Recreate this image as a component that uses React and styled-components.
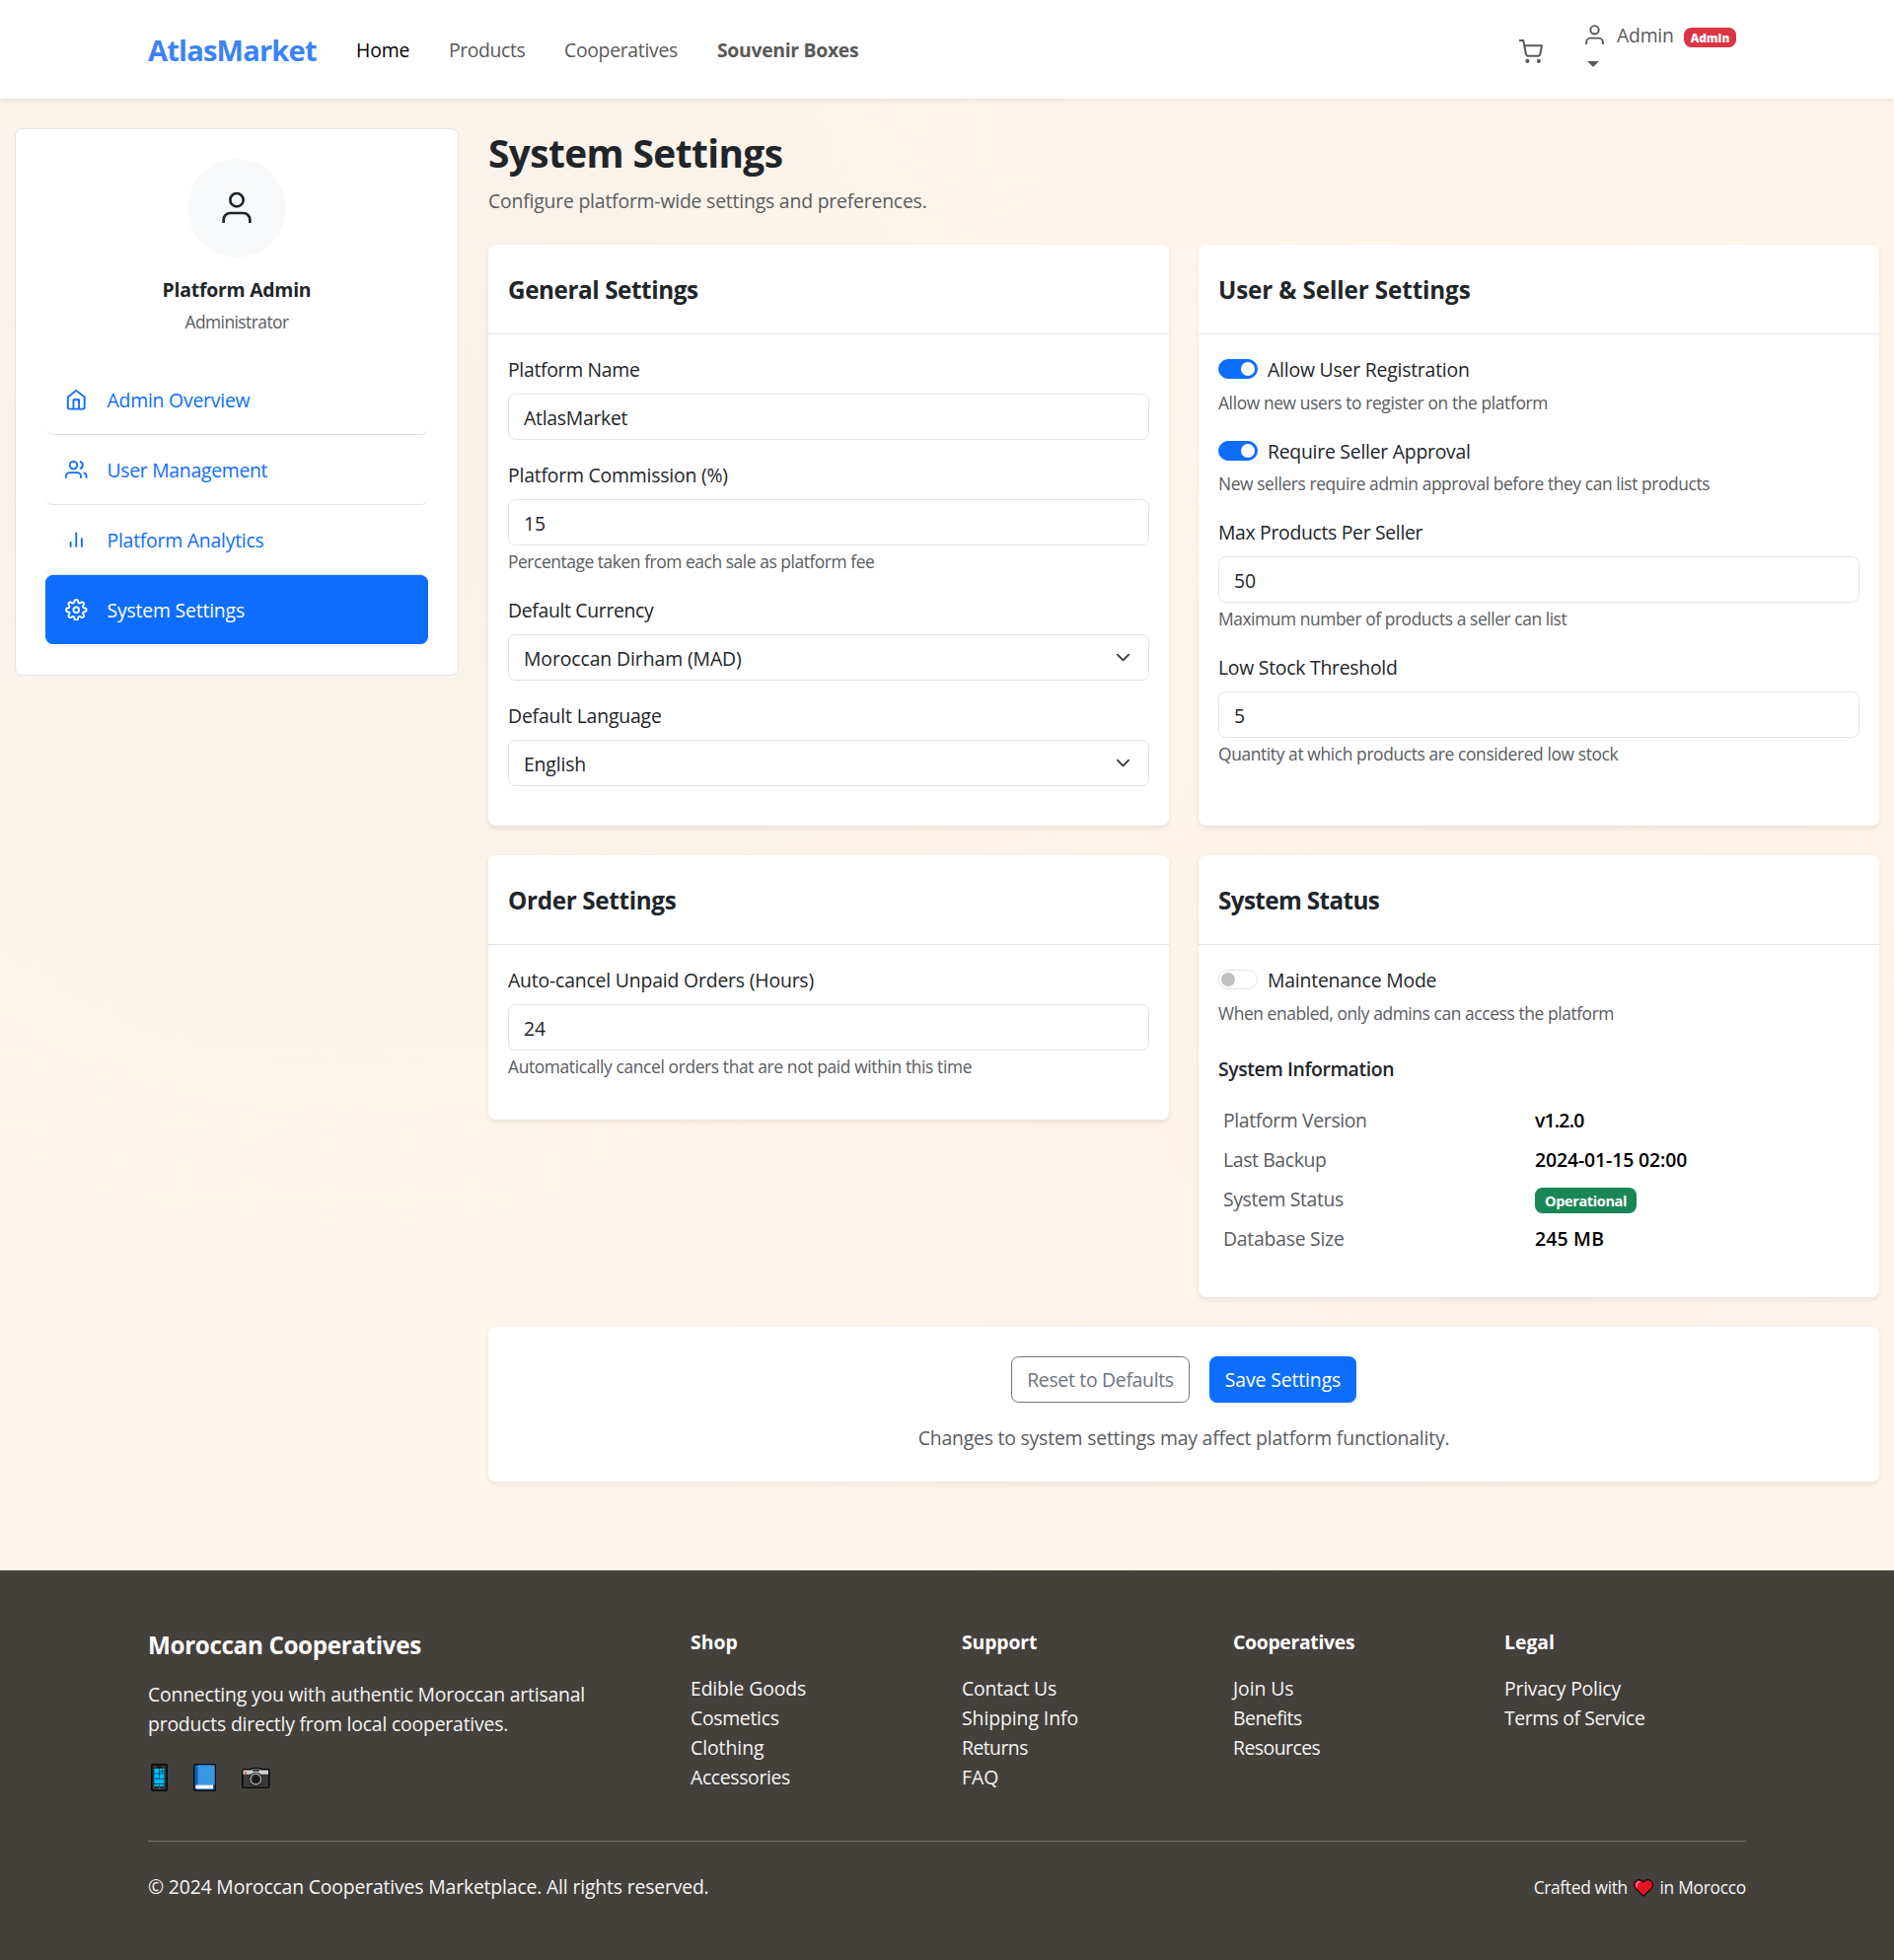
import React from "react";
import styled, { createGlobalStyle, css } from "styled-components";
import {
  FiBarChart2,
  FiHome,
  FiSettings,
  FiShoppingCart,
  FiUser,
  FiUsers,
} from "react-icons/fi";

const colors = {
  primary: "#0d6efd",
  brand: "#3b82f6",
  text: "#212529",
  muted: "#595c5f",
  border: "#dee2e6",
  footer: "#44403c",
  footerText: "#f5f5f4",
};

const Global = createGlobalStyle`
  *, *::before, *::after { box-sizing: border-box; }
  body {
    margin: 0;
    font-family: "Open Sans", "Noto Sans", sans-serif;
    font-size: 19.4px;
    line-height: 30px;
    color: ${colors.text};
    background-color: #fff6eb;
    background-image:
      radial-gradient(circle at 350px 480px, rgba(59, 130, 220, 0.035) 0, rgba(59, 130, 220, 0.027) 400px, rgba(59, 130, 220, 0) 860px),
      radial-gradient(circle at 1536px 1000px, rgba(214, 100, 40, 0.03) 0, rgba(214, 100, 40, 0) 1000px);
  }
  h1, h2, h3, h4, p, ul { margin: 0; padding: 0; }
  ul { list-style: none; }
  a { color: inherit; text-decoration: none; }
`;

/* Single line of text: a fixed row height with optional letter tracking. */
const line = css`
  height: 30px;
  line-height: 32px;
  white-space: nowrap;
  letter-spacing: ${(p) => (p.$ls === undefined ? -0.2 : p.$ls)}px;
`;

const cardSurface = css`
  background: #fff;
  border-radius: 7.5px;
  box-shadow: 0 2.5px 5px rgba(0, 0, 0, 0.075);
`;

/* ---------- top bar ---------- */

const TopBar = styled.header`
  position: relative;
  height: 100px;
  background: #fff;
  box-shadow: 0 2.5px 5px rgba(0, 0, 0, 0.075);
`;

const Container = styled.div`
  width: 1620px;
  margin: 0 auto;
`;

const NavRow = styled(Container)`
  height: 100px;
  display: flex;
  align-items: center;
`;

const Brand = styled.a`
  width: 211px;
  height: 45px;
  font-size: 29.1px;
  font-weight: 700;
  line-height: 47px;
  letter-spacing: -0.81px;
  color: ${colors.brand};
`;

const NavLinks = styled.nav`
  flex: 1;
  display: flex;
  gap: 40px;
`;

const NavLink = styled.a`
  ${line}
  width: ${(p) => p.$width}px;
  color: ${(p) => (p.$active ? "#000" : "#595959")};
  font-weight: ${(p) => (p.$strong ? 700 : 400)};
`;

const CartLink = styled.a`
  display: flex;
  margin: 5px 40px 0 0;
  color: #595959;
  svg { stroke-width: 1.9; stroke-linecap: butt; }
`;

const UserMenu = styled.div`
  width: 166px;
  height: 60px;
  color: #595959;
`;

const UserRow = styled.div`
  display: flex;
  align-items: flex-start;
  height: 30px;
  svg { margin-top: 3px; stroke-width: 1.9; stroke-linecap: butt; }
`;

const UserName = styled.span`
  ${line}
  width: 68px;
  margin-left: 10px;
`;

const RoleBadge = styled.span`
  width: 53px;
  height: 20px;
  margin-top: 8px;
  border-radius: 7.5px;
  background: #dc3545;
  color: #fff;
  font-size: 11.8px;
  font-weight: 800;
  line-height: 21px;
  text-align: center;
`;

const Caret = styled.span`
  display: block;
  width: 12px;
  margin: 12px 0 0 5px;
  border: 6px solid transparent;
  border-top-color: currentColor;
  border-bottom: 0;
`;

/* ---------- page layout ---------- */

const Page = styled.div`
  display: grid;
  grid-template-columns: 450px 1fr;
  gap: 30px;
  align-items: start;
  min-height: 1492px;
  padding: 30px 15px 0;
`;

const Sidebar = styled.aside`
  height: 555px;
  padding: 30px;
  background: #fff;
  border: 1px solid ${colors.border};
  border-radius: 7.5px;
`;

const Avatar = styled.div`
  width: 100px;
  height: 100px;
  margin: 0 auto 20px;
  display: flex;
  align-items: center;
  justify-content: center;
  border-radius: 50%;
  background: #f8f9fa;
  svg { stroke-width: 1.6; stroke-linecap: butt; }
`;

const ProfileName = styled.h2`
  height: 24px;
  margin-bottom: 5px;
  font-size: 19.4px;
  font-weight: 700;
  line-height: 26px;
  letter-spacing: -0.23px;
  text-align: center;
`;

const SmallText = styled.small`
  font-size: 17.4px;
`;

const ProfileRole = styled.p`
  ${line}
  margin-bottom: 30px;
  text-align: center;
  color: ${colors.muted};
`;

const SideLink = styled.a`
  display: flex;
  align-items: center;
  height: ${(p) => (p.$active ? 70 : 71)}px;
  padding: 0 20px;
  border-radius: 7.5px;
  border-bottom: ${(p) => (p.$active ? "0" : `1px solid ${colors.border}`)};
  background: ${(p) => (p.$active ? colors.primary : "transparent")};
  color: ${(p) => (p.$active ? "#fff" : colors.primary)};
  svg { margin-right: 20px; stroke-width: 2; stroke-linecap: butt; }
`;

const SideLabel = styled.span`
  ${line}
`;

const PageTitle = styled.h1`
  height: 48px;
  margin-bottom: 10px;
  font-size: 38.8px;
  font-weight: 700;
  line-height: 50px;
  letter-spacing: -0.59px;
`;

const PageLead = styled.p`
  ${line}
  margin-bottom: 30px;
  color: ${colors.muted};
`;

const CardGrid = styled.div`
  display: grid;
  grid-template-columns: 1fr 1fr;
  grid-template-rows: 589px 448px;
  gap: 30px;
  align-items: start;
`;

const Card = styled.section`
  ${cardSurface}
  height: ${(p) => p.$height}px;
`;

const CardHeader = styled.div`
  height: 91px;
  padding: 30px 20px;
  border-bottom: 1px solid ${colors.border};
`;

const CardTitle = styled.h3`
  ${line}
  font-size: 24.25px;
  font-weight: 700;
`;

const CardBody = styled.div`
  padding: 20px;
`;

/* ---------- form parts ---------- */

const Group = styled.div`
  margin-bottom: 20px;
`;

const Label = styled.label`
  ${line}
  display: block;
  margin-bottom: 10px;
`;

const control = css`
  display: block;
  width: 100%;
  height: 47px;
  margin: 0;
  padding: 8.5px 15px 6.5px;
  border: 1px solid ${colors.border};
  border-radius: 7.5px;
  background: #fff;
  color: ${colors.text};
  font-family: inherit;
  font-size: 19.4px;
  line-height: 30px;
  letter-spacing: ${(p) => p.$ls || 0}px;
  outline: none;
`;

const Input = styled.input`
  ${control}
`;

const SelectWrap = styled.div`
  position: relative;
`;

const Select = styled.select`
  ${control}
  appearance: none;
`;

const Chevron = styled.svg`
  position: absolute;
  top: 16px;
  right: 19px;
  width: 15px;
  height: 15px;
  pointer-events: none;
`;

const HelpText = styled.div`
  ${line}
  color: ${colors.muted};
`;

const SwitchRow = styled.div`
  display: flex;
  height: 32.5px;
`;

const SwitchTrack = styled.span`
  display: flex;
  align-items: center;
  justify-content: ${(p) => (p.$on ? "flex-end" : "flex-start")};
  width: 40px;
  height: 20px;
  margin: 5px 10px 0 0;
  padding: 0 2px;
  border: 1px solid ${(p) => (p.$on ? colors.primary : colors.border)};
  border-radius: 20px;
  background: ${(p) => (p.$on ? colors.primary : "#fff")};
`;

const SwitchKnob = styled.span`
  width: 14px;
  height: 14px;
  border-radius: 50%;
  background: ${(p) => (p.$on ? "#fff" : "#bfbfbf")};
`;

const SwitchLabel = styled.span`
  ${line}
`;

/* ---------- system information ---------- */

const InfoTitle = styled.h4`
  height: 24px;
  margin: 30px 0 20.5px;
  font-size: 19.4px;
  font-weight: 600;
  line-height: 26px;
  letter-spacing: -0.4px;
`;

const InfoRow = styled.div`
  display: grid;
  grid-template-columns: 316px 1fr;
  height: 40px;
  padding: 5px;
`;

const InfoKey = styled.span`
  ${line}
  color: ${colors.muted};
`;

const InfoValue = styled.span`
  ${line}
  color: #000;
  font-weight: 600;
`;

const StatusBadge = styled.span`
  width: 103px;
  height: 26px;
  margin-top: 4px;
  border-radius: 7.5px;
  background: #198754;
  color: #fff;
  font-size: 14.55px;
  font-weight: 700;
  line-height: 27px;
  letter-spacing: -0.39px;
  text-align: center;
`;

/* ---------- actions ---------- */

const Actions = styled.section`
  ${cardSurface}
  height: 157px;
  margin-top: 30px;
  padding-top: 30px;
`;

const ButtonRow = styled.div`
  display: flex;
  justify-content: center;
  gap: 20px;
  margin-bottom: 20px;
`;

const Button = styled.button`
  width: ${(p) => p.$width}px;
  height: 47px;
  padding: 1px 0 0;
  border: 1px solid ${(p) => (p.$primary ? colors.primary : "#6c757d")};
  border-radius: 7.5px;
  background: ${(p) => (p.$primary ? colors.primary : "#fff")};
  color: ${(p) => (p.$primary ? "#fff" : "#6c757d")};
  font-family: inherit;
  font-size: 19.4px;
  line-height: 30px;
  letter-spacing: ${(p) => p.$ls}px;
`;

const ActionNote = styled.p`
  ${line}
  text-align: center;
  color: ${colors.muted};
`;

/* ---------- footer ---------- */

const Footer = styled.footer`
  height: 395px;
  padding-top: 60px;
  background: ${colors.footer};
  color: ${colors.footerText};
`;

const FooterGrid = styled(Container)`
  display: grid;
  grid-template-columns: 550px 275px 275px 275px 1fr;
  height: 214px;
`;

const FooterBrand = styled.h3`
  ${line}
  margin-bottom: 20px;
  color: #fff;
  font-size: 24.25px;
  font-weight: 700;
`;

const FooterLine = styled.span`
  ${line}
  display: block;
`;

const FooterHeading = styled.h4`
  height: 24px;
  margin-bottom: 20px;
  color: #fff;
  font-size: 19.4px;
  font-weight: 700;
  line-height: 26px;
  letter-spacing: ${(p) => p.$ls}px;
`;

const FooterItem = styled.li`
  ${line}
`;

const Social = styled.div`
  display: flex;
  align-items: center;
  gap: 26px;
  height: 28px;
  margin: 26px 0 0 3px;
`;

const FooterBottom = styled(Container)`
  display: flex;
  justify-content: space-between;
  padding-top: 30px;
  border-top: 1px solid #78716c;
`;

const Copyright = styled.p`
  ${line}
`;

const Crafted = styled.p`
  display: flex;
  height: 30px;
  font-size: 17.4px;
  line-height: 33px;
  svg { margin: 8px 6.5px 0 6px; }
`;

const CraftedWord = styled.span`
  letter-spacing: ${(p) => p.$ls}px;
`;

/* ---------- drawings ---------- */

const PhoneIcon = () => (
  <svg width="17" height="28" viewBox="0 0 17 28">
    <rect width="17" height="28" rx="2" fill="#080808" />
    <rect x="1.6" y="1.5" width="13.8" height="25" rx="1" fill="#333" />
    <rect x="6" y="2.4" width="5" height="1.2" fill="#0a0a0a" />
    <rect x="3" y="4.8" width="11" height="18.4" fill="#06202c" />
    <g fill="#00bcf8">
      <rect x="3.3" y="5" width="5" height="4.7" />
      <rect x="8.9" y="5" width="2.1" height="2.1" />
      <rect x="11.500" y="5" width="2.1" height="2.1" />
      <rect x="8.900" y="7.600" width="2.1" height="2.1" />
      <rect x="11.500" y="7.600" width="2.1" height="2.1" />
      <rect x="3.300" y="10.300" width="5" height="4.500" />
      <rect x="8.900" y="10.300" width="4.700" height="4.500" />
      <rect x="3.300" y="15.500" width="10.300" height="4.500" />
      <rect x="3.300" y="20.700" width="5" height="2.200" />
      <rect x="8.900" y="20.700" width="4.700" height="2.200" />
    </g>
    <rect x="8" y="24.200" width="1.200" height="1.200" fill="#888" />
  </svg>
);

const BookIcon = () => (
  <svg width="23" height="28" viewBox="0 0 23 28">
    <path d="M3 0h20v28H3a3 3 0 0 1-3-3V3a3 3 0 0 1 3-3z" fill="#050b12" />
    <path d="M3 1.4h18.6v25.2H3a1.6 1.6 0 0 1-1.6-1.6V3A1.6 1.6 0 0 1 3 1.4z" fill="#1262ae" />
    <path d="M4.6 1.4h17v20.1h-17z" fill="#3b96e0" />
    <path d="M4 21.6h16v4H4a2 2 0 0 1 0-4z" fill="#f4f4f4" />
  </svg>
);

const CameraIcon = () => (
  <svg width="28.5" height="21" viewBox="0 0 28.5 21">
    <path d="M2 1h7l1.5-1h8L20 1h6.5a2 2 0 0 1 2 2v16a2 2 0 0 1-2 2H2a2 2 0 0 1-2-2V3a2 2 0 0 1 2-2z" fill="#050505" />
    <path d="M1.5 3H27v16a.7.7 0 0 1-.7.7H2.2a.7.7 0 0 1-.7-.7z" fill="#3a3a3a" />
    <path d="M1.5 2.6h8.2L11 1.4h7l1.300 1.200H27v4.200H1.500z" fill="#d2d2d2" />
    <rect x="3" y="4.2" width="2" height="2" fill="#e8462c" />
    <rect x="11" y="2" width="7" height="1.8" fill="#333" />
    <circle cx="14.3" cy="11.7" r="7" fill="#111" />
    <circle cx="14.3" cy="11.7" r="5.5" fill="#2e2e2e" stroke="#b8b8b8" strokeWidth="1.2" />
    <circle cx="14.3" cy="11.7" r="3.3" fill="#181818" />
  </svg>
);

const HeartIcon = () => (
  <svg width="20" height="18" viewBox="0 0 20 18">
    <path
      d="M10 17.2L1.9 9.4C-.2 7.2.3 3.2 2.7 1.6 5.1.1 8 .7 10 3c2-2.3 4.900-2.900 7.300-1.400 2.400 1.600 2.900 5.600.8 7.800z"
      fill="#e81224"
      stroke="#0c0c0c"
      strokeWidth="1.2"
      strokeLinejoin="round"
    />
    <path d="M3.4 7.2C2.6 5 3.7 3.2 5.7 3" fill="none" stroke="#f9a0a6" strokeWidth="1.3" strokeLinecap="round" />
  </svg>
);

/* ---------- composed parts ---------- */

const Field = ({ label, ls, value, help, helpLs }) => (
  <Group>
    <Label $ls={ls}>{label}</Label>
    <Input defaultValue={value} $ls={value.length > 2 ? -0.27 : 0} />
    {help && <Help ls={helpLs}>{help}</Help>}
  </Group>
);

const Help = ({ children, ls }) => (
  <HelpText $ls={ls}>
    <SmallText>{children}</SmallText>
  </HelpText>
);

const SelectField = ({ label, ls, value, valueLs }) => (
  <Group>
    <Label $ls={ls}>{label}</Label>
    <SelectWrap>
      <Select $ls={valueLs} defaultValue={value}>
        <option>{value}</option>
      </Select>
      <Chevron viewBox="0 0 16 16" fill="none">
        <path d="m2 5 6 6 6-6" stroke="#343a40" strokeWidth="2" strokeLinecap="round" strokeLinejoin="round" />
      </Chevron>
    </SelectWrap>
  </Group>
);

const SwitchField = ({ label, ls, on, help, helpLs }) => (
  <Group>
    <SwitchRow>
      <SwitchTrack $on={on}>
        <SwitchKnob $on={on} />
      </SwitchTrack>
      <SwitchLabel $ls={ls}>{label}</SwitchLabel>
    </SwitchRow>
    <Help ls={helpLs}>{help}</Help>
  </Group>
);

const Panel = ({ title, ls, height, children }) => (
  <Card $height={height}>
    <CardHeader>
      <CardTitle $ls={ls}>{title}</CardTitle>
    </CardHeader>
    <CardBody>{children}</CardBody>
  </Card>
);

const sideLinks = [
  { icon: FiHome, text: "Admin Overview", ls: -0.22 },
  { icon: FiUsers, text: "User Management", ls: -0.3 },
  { icon: FiBarChart2, text: "Platform Analytics", ls: -0.23 },
  { icon: FiSettings, text: "System Settings", ls: -0.19, active: true },
];

const footerColumns = [
  {
    title: "Shop",
    ls: 0.02,
    items: [["Edible Goods", -0.14], ["Cosmetics", -0.3], ["Clothing", -0.05], ["Accessories", -0.35]],
  },
  {
    title: "Support",
    ls: -0.13,
    items: [["Contact Us", -0.2], ["Shipping Info", -0.07], ["Returns", -0.55], ["FAQ", 0]],
  },
  {
    title: "Cooperatives",
    ls: -0.32,
    items: [["Join Us", -0.1], ["Benefits", -0.5], ["Resources", -0.53]],
  },
  {
    title: "Legal",
    ls: 0,
    items: [["Privacy Policy", -0.23], ["Terms of Service", -0.42]],
  },
];

export default function App() {
  return (
    <>
      <Global />
      <TopBar>
        <NavRow>
          <Brand href="#">AtlasMarket</Brand>
          <NavLinks>
            <NavLink href="#" $active $width={54} $ls={-0.15}>Home</NavLink>
            <NavLink href="#" $width={77} $ls={-0.4}>Products</NavLink>
            <NavLink href="#" $width={115} $ls={-0.31}>Cooperatives</NavLink>
            <NavLink href="#" $strong $width={146} $ls={-0.32}>Souvenir Boxes</NavLink>
          </NavLinks>
          <CartLink href="#">
            <FiShoppingCart size={25} />
          </CartLink>
          <UserMenu>
            <UserRow>
              <FiUser size={25} />
              <UserName $ls={-0.24}>Admin</UserName>
              <RoleBadge>Admin</RoleBadge>
            </UserRow>
            <Caret />
          </UserMenu>
        </NavRow>
      </TopBar>

      <Page>
        <Sidebar>
          <Avatar>
            <FiUser size={40} />
          </Avatar>
          <ProfileName>Platform Admin</ProfileName>
          <ProfileRole $ls={-0.55}>
            <SmallText>Administrator</SmallText>
          </ProfileRole>
          <nav>
            {sideLinks.map(({ icon: Icon, text, ls, active }) => (
              <SideLink key={text} href="#" $active={active}>
                <Icon size={22.5} />
                <SideLabel $ls={ls}>{text}</SideLabel>
              </SideLink>
            ))}
          </nav>
        </Sidebar>

        <main>
          <PageTitle>System Settings</PageTitle>
          <PageLead>Configure platform-wide settings and preferences.</PageLead>

          <CardGrid>
            <Panel title="General Settings" ls={-0.42} height={589}>
              <Field label="Platform Name" ls={-0.31} value="AtlasMarket" />
              <Field
                label="Platform Commission (%)"
                ls={-0.2}
                value="15"
                help="Percentage taken from each sale as platform fee"
                helpLs={-0.44}
              />
              <SelectField label="Default Currency" ls={-0.33} value="Moroccan Dirham (MAD)" valueLs={-0.1} />
              <SelectField label="Default Language" ls={-0.17} value="English" valueLs={-0.15} />
            </Panel>

            <Panel title="User & Seller Settings" ls={-0.13} height={589}>
              <SwitchField
                on
                label="Allow User Registration"
                ls={-0.21}
                help="Allow new users to register on the platform"
                helpLs={-0.38}
              />
              <SwitchField
                on
                label="Require Seller Approval"
                ls={-0.25}
                help="New sellers require admin approval before they can list products"
                helpLs={-0.41}
              />
              <Field
                label="Max Products Per Seller"
                ls={-0.32}
                value="50"
                help="Maximum number of products a seller can list"
                helpLs={-0.43}
              />
              <Field
                label="Low Stock Threshold"
                ls={-0.26}
                value="5"
                help="Quantity at which products are considered low stock"
                helpLs={-0.38}
              />
            </Panel>

            <Panel title="Order Settings" ls={-0.34} height={268}>
              <Field
                label="Auto-cancel Unpaid Orders (Hours)"
                ls={-0.18}
                value="24"
                help="Automatically cancel orders that are not paid within this time"
                helpLs={-0.37}
              />
            </Panel>

            <Panel title="System Status" ls={-0.62} height={448}>
              <SwitchField
                label="Maintenance Mode"
                ls={-0.2}
                help="When enabled, only admins can access the platform"
                helpLs={-0.41}
              />
              <InfoTitle>System Information</InfoTitle>
              <InfoRow>
                <InfoKey $ls={-0.36}>Platform Version</InfoKey>
                <InfoValue $ls={-0.8}>v1.2.0</InfoValue>
              </InfoRow>
              <InfoRow>
                <InfoKey $ls={-0.38}>Last Backup</InfoKey>
                <InfoValue $ls={-0.1}>2024-01-15 02:00</InfoValue>
              </InfoRow>
              <InfoRow>
                <InfoKey $ls={-0.37}>System Status</InfoKey>
                <StatusBadge>Operational</StatusBadge>
              </InfoRow>
              <InfoRow>
                <InfoKey $ls={-0.25}>Database Size</InfoKey>
                <InfoValue $ls={0.2}>245 MB</InfoValue>
              </InfoRow>
            </Panel>
          </CardGrid>

          <Actions>
            <ButtonRow>
              <Button $width={181} $ls={-0.3}>Reset to Defaults</Button>
              <Button $primary $width={149} $ls={-0.12}>Save Settings</Button>
            </ButtonRow>
            <ActionNote>Changes to system settings may affect platform functionality.</ActionNote>
          </Actions>
        </main>
      </Page>

      <Footer>
        <FooterGrid>
          <div>
            <FooterBrand $ls={-0.37}>Moroccan Cooperatives</FooterBrand>
            <p>
              <FooterLine>Connecting you with authentic Moroccan artisanal</FooterLine>
              <FooterLine>products directly from local cooperatives.</FooterLine>
            </p>
            <Social>
              <PhoneIcon />
              <BookIcon />
              <CameraIcon />
            </Social>
          </div>
          {footerColumns.map((col) => (
            <div key={col.title}>
              <FooterHeading $ls={col.ls}>{col.title}</FooterHeading>
              <ul>
                {col.items.map(([text, ls]) => (
                  <FooterItem key={text} $ls={ls}>
                    <a href="#">{text}</a>
                  </FooterItem>
                ))}
              </ul>
            </div>
          ))}
        </FooterGrid>
        <FooterBottom>
          <Copyright $ls={-0.17}>© 2024 Moroccan Cooperatives Marketplace. All rights reserved.</Copyright>
          <Crafted>
            <CraftedWord $ls={-0.35}>Crafted with</CraftedWord>
            <HeartIcon />
            <CraftedWord $ls={-0.28}>in Morocco</CraftedWord>
          </Crafted>
        </FooterBottom>
      </Footer>
    </>
  );
}
